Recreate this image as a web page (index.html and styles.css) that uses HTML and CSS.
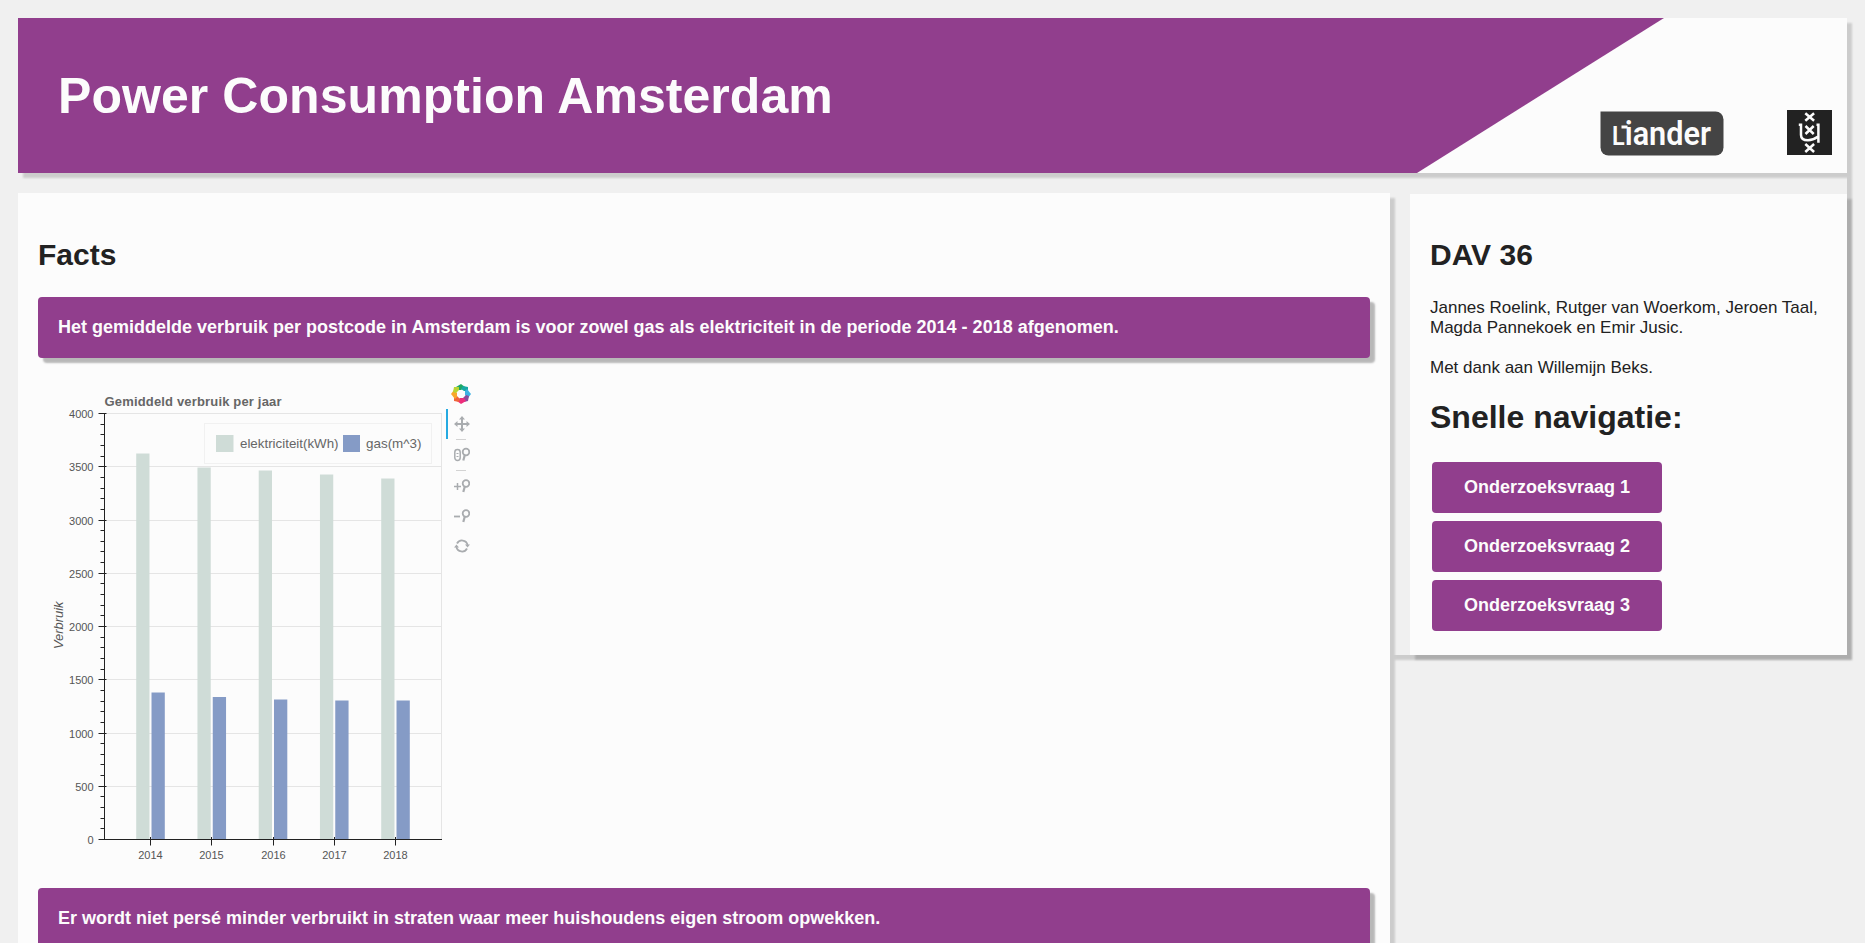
FILE: index.html
```html
<!DOCTYPE html>
<html lang="nl">
<head>
<meta charset="utf-8">
<title>Power Consumption Amsterdam</title>
<link rel="stylesheet" href="styles.css">
</head>
<body>
<header class="banner">
  <h1 class="title">Power Consumption Amsterdam</h1>
  <div class="logos">
    <svg class="liander" width="124" height="46" viewBox="0 0 124 46">
      <path d="M.5 1.500H115.500a8 8 0 0 1 8 8V37.500a8 8 0 0 1-8 8H8.500a8 8 0 0 1-8-8Z" fill="#444"/>
      <text class="liander-text" x="12" y="34.500" textLength="99" lengthAdjust="spacingAndGlyphs"><tspan font-size="26">L</tspan>iander</text>
      <path d="M21.500 17h6" stroke="#fcfcfc" stroke-width="3"/>
    </svg>
    <svg class="uva" width="45" height="45" viewBox="0 0 45 45">
      <rect width="45" height="45" fill="#222"/>
      <path d="M11.800 14.700h2.200V25q0 5.300 7 5.300 5 0 9.700-3.500M29.500 14.700h1.900V31.500h1.300" fill="none" stroke="#fcfcfc" stroke-width="2.500"/>
      <path d="M18.300 3.200l8.800 7.600M27.100 3.200l-8.800 7.600M18.500 16l8.200 8M26.700 16l-8.200 8M18.300 34l8.800 8M27.100 34l-8.800 8" stroke="#fcfcfc" stroke-width="2.500"/>
    </svg>
  </div>
</header>
<div class="columns">
  <main class="main">
    <h2 class="heading">Facts</h2>
    <div class="fact">Het gemiddelde verbruik per postcode in Amsterdam is voor zowel gas als elektriciteit in de periode 2014 - 2018 afgenomen.</div>
    <div class="plot">
      <svg class="chart" id="chart" width="408" height="500" viewBox="38 378 408 500"></svg>
      <div class="toolbar">
        <svg class="bokeh" width="20" height="20" viewBox="-10 -10 20 20">
          <path fill="#1fa764" d="M-5-7L0-10 4-7 0-4-3-4Z"/>
          <path fill="#17a9a3" d="M2-8L7-7 7-3 3-3 0-5Z"/>
          <path fill="#3fb1e3" d="M6-5L10 0 7 4 4 1 4-3Z"/>
          <path fill="#8b4a9c" d="M8 2L7 7 3 8 2 4 5 1Z"/>
          <path fill="#ee2d7b" d="M5 7L0 10-4 7-1 4 3 4Z"/>
          <path fill="#f0643c" d="M-2 8L-7 7-7 3-4 2-1 5Z"/>
          <path fill="#f9a72b" d="M-6 5L-10 0-7-4-4-1-4 3Z"/>
          <path fill="#b9d433" d="M-8-2L-7-7-2-7-2-4-5-1Z"/>
        </svg>
        <div class="tool active">
          <svg width="16" height="16" viewBox="0 0 16 16"><path d="M8 2v12M2 8h12" stroke="#a9acaf" stroke-width="2"/><path d="M8 0l3 3.500H5zM8 16l3-3.500H5zM0 8l3.500-3v6zM16 8l-3.500-3v6z" fill="#a9acaf"/></svg>
        </div>
        <i class="rule"></i>
        <div class="tool">
          <svg width="16" height="16" viewBox="0 0 16 16" fill="none" stroke="#a9acaf"><rect x=".8" y="2.500" width="5.400" height="11" rx="2.700" stroke-width="1.500"/><path d="M2.500 6.500h2M2.500 9.500h2" stroke-width="1"/><circle cx="12" cy="5" r="3.300" stroke-width="1.800"/><path d="M10.800 8L9.300 13.500" stroke-width="2.200"/></svg>
        </div>
        <i class="rule"></i>
        <div class="tool">
          <svg width="16" height="16" viewBox="0 0 16 16" fill="none" stroke="#a9acaf"><path d="M0 8.500h7M3.500 5v7" stroke-width="1.500"/><circle cx="12" cy="5.500" r="3.300" stroke-width="1.800"/><path d="M10.800 8.500L9.300 14" stroke-width="2.200"/></svg>
        </div>
        <div class="tool">
          <svg width="16" height="16" viewBox="0 0 16 16" fill="none" stroke="#a9acaf"><path d="M0 8.500h6" stroke-width="1.800"/><circle cx="12" cy="5.500" r="3.300" stroke-width="1.800"/><path d="M10.800 8.500L9.300 14" stroke-width="2.200"/></svg>
        </div>
        <div class="tool">
          <svg width="16" height="16" viewBox="0 0 16 16" fill="none" stroke="#a9acaf" stroke-width="1.800"><path d="M3 5.500A5.700 5.700 0 0 1 13.600 7M13 10.500A5.700 5.700 0 0 1 2.400 9"/><path d="M11 6.500h5l-2.500 3zM5 9.500H0l2.500-3z" fill="#a9acaf" stroke="none"/></svg>
        </div>
      </div>
    </div>
    <div class="fact">Er wordt niet persé minder verbruikt in straten waar meer huishoudens eigen stroom opwekken.</div>
  </main>
  <aside class="side">
    <div class="card">
      <h2 class="heading">DAV 36</h2>
      <p class="text">Jannes Roelink, Rutger van Woerkom, Jeroen Taal,<br>Magda Pannekoek en Emir Jusic.<br><br>Met dank aan Willemijn Beks.</p>
      <h2 class="heading nav-heading">Snelle navigatie:</h2>
      <nav class="nav">
        <a class="button">Onderzoeksvraag 1</a>
        <a class="button">Onderzoeksvraag 2</a>
        <a class="button">Onderzoeksvraag 3</a>
      </nav>
    </div>
  </aside>
</div>
<script src="chart.js"></script>
</body>
</html>
```
FILE: chart.js
```js
var parts = [];
var left = 104.5, right = 441.5, top0 = 413.5, base = 839.5;
function line(x1, y1, x2, y2, c) {
  parts.push('<line x1="' + x1 + '" y1="' + y1 + '" x2="' + x2 + '" y2="' + y2 + '" stroke="' + c + '"/>');
}
function text(x, y, cls, s, extra) {
  parts.push('<text x="' + x + '" y="' + y + '" class="' + cls + '" ' + (extra || '') + '>' + s + '</text>');
}
function yOf(v) { return Math.floor(base - v * (base - top0) / 4000) + 0.5; }
parts.push('<rect x="104.5" y="413.5" width="337" height="426" fill="none" stroke="#e5e5e5"/>');
for (var v = 500; v < 4000; v += 500) line(left, yOf(v), right, yOf(v), '#e5e5e5');
var ticks = [150.5, 211.5, 273.5, 334.5, 395.5];
var power = [453.5, 467.5, 470.5, 474.5, 478.5];
var gas = [692.5, 697, 699.5, 700.5, 700.5];
for (var i = 0; i < 5; i++) {
  var x = 136.2 + 61.25 * i;
  parts.push('<rect x="' + x + '" y="' + power[i] + '" width="13.3" height="' + (base - power[i]) + '" fill="#cfdcd7"/>');
  parts.push('<rect x="' + (x + 15.3) + '" y="' + gas[i] + '" width="13.3" height="' + (base - gas[i]) + '" fill="#859bc6"/>');
}
line(left, 413, left, 840, '#222');
line(104, base, 442, base, '#222');
for (v = 0; v <= 4000; v += 100) {
  var major = v % 500 === 0, y = yOf(v);
  line(major ? 98.5 : 100.5, y, major ? 106.5 : 104.5, y, '#222');
  if (major) text(93.5, y + 4.5, 'tick', v, 'text-anchor="end"');
}
for (i = 0; i < 5; i++) {
  line(ticks[i], 837, ticks[i], 845.5, '#222');
  text(ticks[i], 859, 'tick', 2014 + i, 'text-anchor="middle"');
}
parts.push('<rect x="204.5" y="423.5" width="227" height="40" fill="#fcfcfc" stroke="#f1f1f1"/>');
parts.push('<rect x="216" y="435" width="17.500" height="17" fill="#cfdcd7"/><rect x="343" y="435" width="17" height="17" fill="#859bc6"/>');
text(240, 448, 'legend', 'elektriciteit(kWh)', 'textLength="98.500" lengthAdjust="spacingAndGlyphs"');
text(366, 448, 'legend', 'gas(m^3)', 'textLength="55.500" lengthAdjust="spacingAndGlyphs"');
text(104.5, 406, 'plot-title', 'Gemiddeld verbruik per jaar', 'textLength="177"');
text(0, 0, 'axis-label', 'Verbruik', 'transform="translate(62.500 649) rotate(-90)" textLength="47.500"');
document.getElementById('chart').innerHTML = parts.join('');
```
FILE: styles.css
```css
* { box-sizing: border-box; }
body {
  margin: 0;
  padding: 18px;
  height: 943px;
  overflow: hidden;
  background: #f0f0f0;
  color: #222;
  font-family: "Liberation Sans", Arial, sans-serif;
}
.banner {
  height: 155px;
  padding: 0 15px 0 40px;
  display: flex;
  justify-content: space-between;
  background: #fcfcfc;
  box-shadow: 5px 5px 2px rgba(0, 0, 0, .15);
  position: relative;
}
.banner::before {
  content: "";
  position: absolute;
  inset: 0;
  background: #913e8d;
  clip-path: polygon(0 0, 1646px 0, 1399px 100%, 0 100%);
}
.title {
  position: relative;
  margin: 48px 0 0;
  font-size: 50px;
  letter-spacing: .06px;
  line-height: 60px;
  color: #fcfcfc;
  white-space: nowrap;
}
.logos {
  position: relative;
  display: flex;
  align-items: flex-end;
  gap: 63px;
  padding-bottom: 18px;
}
.liander { margin-bottom: -1px; }
.liander-text {
  font: 600 34px Roboto, sans-serif;
  fill: #fcfcfc;
}
.columns { display: flex; align-items: flex-start; }
.main {
  width: 1372px;
  height: 750px;
  flex: none;
  margin-top: 20px;
  padding: 42px 20px 0;
  overflow: hidden;
  background: #fcfcfc;
  box-shadow: 5px 5px 2px rgba(0, 0, 0, .15);
}
.heading {
  margin: 0;
  font-size: 30px;
  line-height: 40px;
}
.fact {
  height: 61px;
  padding: 0 20px;
  border-radius: 4px;
  background: #913e8d;
  box-shadow: 5px 5px 2px rgba(0, 0, 0, .27);
  color: #fcfcfc;
  font-size: 18px;
  font-weight: bold;
  line-height: 60px;
}
.heading + .fact { margin-top: 22px; }
.plot {
  height: 530px;
  display: flex;
  padding-top: 20px;
}
.tick { font-size: 11px; fill: #555; }
.legend { font-size: 13.500px; fill: #666; }
.plot-title { font-size: 13px; font-weight: bold; fill: #666; }
.axis-label { font-size: 13px; font-style: italic; fill: #555; }
.toolbar { width: 30px; padding-top: 6px; }
.bokeh { display: block; margin: 0 0 5px 5px; }
.tool {
  height: 30px;
  padding: 7px 0 0 6px;
  border-left: 2px solid transparent;
}
.tool svg { display: block; }
.active { border-left-color: #26aae1; }
.rule { display: block; width: 10px; height: 1px; margin-left: 10px; background: #d3d3d3; }
.side {
  flex: 1;
  height: 482px;
  padding: 21px 0 0 20px;
  box-shadow: 5px 5px 2px rgba(0, 0, 0, .15);
}
.card {
  height: 461px;
  padding: 41px 20px 0;
  background: #fcfcfc;
  box-shadow: 5px 5px 2px rgba(0, 0, 0, .15);
}
.text {
  margin: 23px 0 0;
  font-size: 17px;
  line-height: 20px;
  white-space: nowrap;
}
.nav-heading { margin-top: 19px; font-size: 32px; }
.nav {
  display: flex;
  flex-direction: column;
  gap: 8px;
  padding: 25px 2px 0;
}
.button {
  width: 230px;
  height: 51px;
  border-radius: 4px;
  background: #913e8d;
  color: #fcfcfc;
  font-size: 18px;
  font-weight: bold;
  line-height: 50px;
  text-align: center;
}
```
